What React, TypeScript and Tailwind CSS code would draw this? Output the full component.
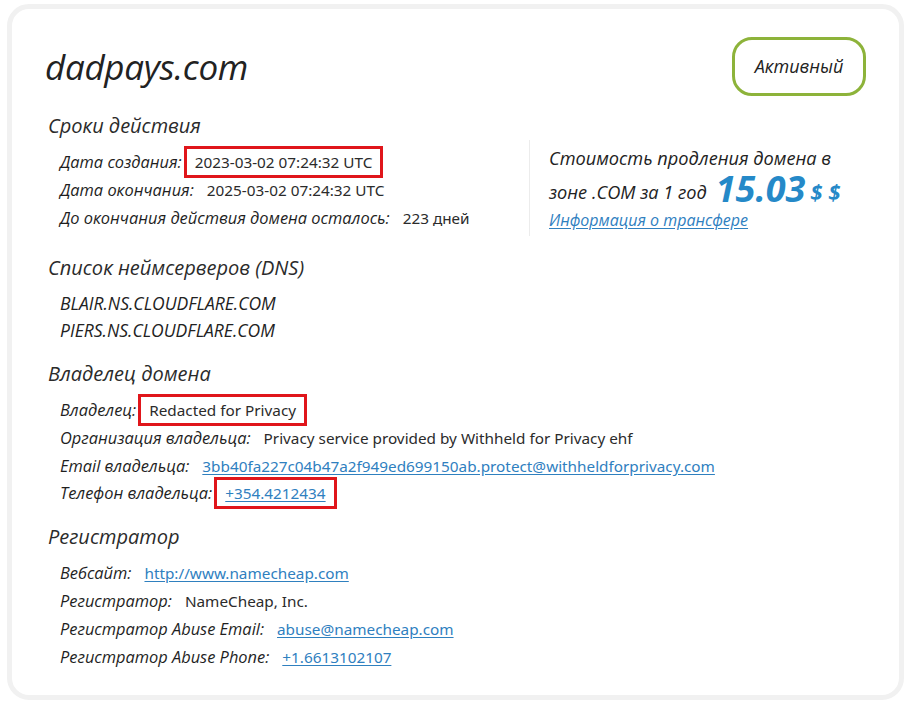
import React from "react";

type Row = { label: string; value: string; link?: boolean; boxed?: boolean };

const italic = { fontFamily: '"Open Sans", "Noto Sans", sans-serif' };

function Section({ title, children, className = "" }: { title: string; children: React.ReactNode; className?: string }) {
  return (
    <div className={className}>
      <h2 className="pl-[3px] text-[20px] leading-[28px] italic text-[#2b2b2b]">{title}</h2>
      <div className="mt-[8px] pl-[15px]">{children}</div>
    </div>
  );
}

function InfoRow({ label, value, link, boxed }: Row) {
  return (
    <div className="h-[27.8px] whitespace-nowrap text-[16.4px] leading-[27.8px]">
      <span className="italic text-[#1f1f1f]">{label}</span>
      <span
        className={
          "ml-[2px] border-[3px] px-[8px] py-[3px] font-['Noto_Sans'] text-[15.3px] " +
          (boxed ? "border-[#e0161b] " : "border-transparent ") +
          (link ? "text-[#2f80bf] underline underline-offset-2" : "text-[#2b2b2b]")
        }
      >
        {value}
      </span>
    </div>
  );
}

const terms: Row[] = [
  { label: "Дата создания:", value: "2023-03-02 07:24:32 UTC", boxed: true },
  { label: "Дата окончания:", value: "2025-03-02 07:24:32 UTC" },
  { label: "До окончания действия домена осталось:", value: "223 дней" },
];

const owner: Row[] = [
  { label: "Владелец:", value: "Redacted for Privacy", boxed: true },
  { label: "Организация владельца:", value: "Privacy service provided by Withheld for Privacy ehf" },
  { label: "Email владельца:", value: "3bb40fa227c04b47a2f949ed699150ab.protect@withheldforprivacy.com", link: true },
  { label: "Телефон владельца:", value: "+354.4212434", link: true, boxed: true },
];

const registrar: Row[] = [
  { label: "Вебсайт:", value: "http://www.namecheap.com", link: true },
  { label: "Регистратор:", value: "NameCheap, Inc." },
  { label: "Регистратор Abuse Email:", value: "abuse@namecheap.com", link: true },
  { label: "Регистратор Abuse Phone:", value: "+1.6613102107", link: true },
];

export default function App() {
  return (
    <div className="min-h-[708px] w-[909px] bg-white pt-[4px] pl-[7px]" style={italic}>
      <div className="h-[696px] w-[897px] rounded-[22px] border-[5px] border-[#f1f1f1] bg-white pr-[33px] pl-[33px] pt-[28px]">
        <div className="flex items-center justify-between">
          <h1 className="text-[35px] leading-[44px] font-medium italic tracking-[-0.3px] text-[#222]">dadpays.com</h1>
          <div className="flex h-[59px] w-[134px] items-center justify-center rounded-[20px] border-[3px] border-[#8db33a] text-[18px] italic text-[#222]">
            Активный
          </div>
        </div>

        <div className="mt-[16px] flex items-start">
          <Section title="Сроки действия" className="w-[484px]">
            {terms.map((r) => (
              <InfoRow key={r.label} {...r} />
            ))}
          </Section>
          <div className="mt-[28px] h-[96px] border-l border-[#ececec] pl-[19px] pt-[4px] italic text-[#222]">
            <div className="text-[18.2px] leading-[28px]">Стоимость продления домена в</div>
            <div className="mt-[2px] flex h-[30px] items-end whitespace-nowrap text-[18.2px] leading-[24px]">
              <span>зоне .COM за 1 год</span>
              <span className="ml-[9px] text-[36px] leading-[30px] font-bold text-[#2589c8]">15.03</span>
              <span className="mb-[1px] ml-[5px] text-[22px] leading-[24px] font-bold text-[#2589c8]">$ $</span>
            </div>
            <a href="#" className="mt-[5px] block text-[16px] leading-[22px] text-[#2f80bf] underline underline-offset-2">
              Информация о трансфере
            </a>
          </div>
        </div>

        <Section title="Список неймсерверов (DNS)" className="mt-[18px]">
          <div className="h-[27px] text-[17.5px] leading-[27px] italic text-[#222]">BLAIR.NS.CLOUDFLARE.COM</div>
          <div className="h-[27px] text-[17.5px] leading-[27px] italic text-[#222]">PIERS.NS.CLOUDFLARE.COM</div>
        </Section>

        <Section title="Владелец домена" className="mt-[16px]">
          {owner.map((r) => (
            <InfoRow key={r.label} {...r} />
          ))}
        </Section>

        <Section title="Регистратор" className="mt-[16px]">
          {registrar.map((r) => (
            <InfoRow key={r.label} {...r} />
          ))}
        </Section>
      </div>
    </div>
  );
}
